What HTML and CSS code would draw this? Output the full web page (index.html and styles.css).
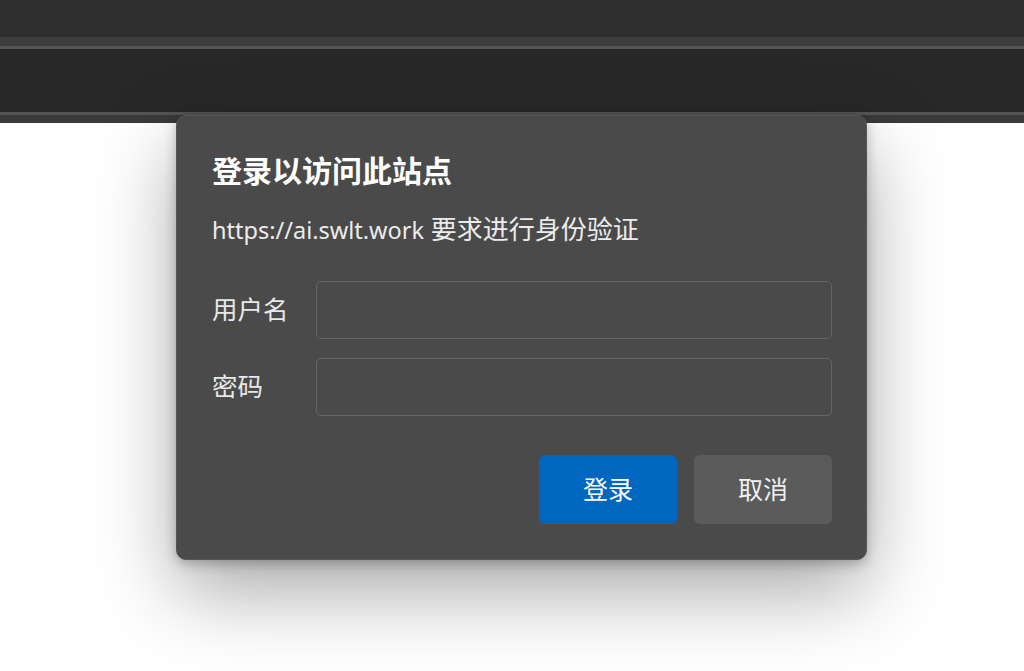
FILE: index.html
```html
<!DOCTYPE html>
<html lang="zh-CN">
<head>
  <meta charset="UTF-8">
  <meta name="viewport" content="width=device-width, initial-scale=1.0">
  <title>登录以访问此站点</title>
  <link rel="stylesheet" href="styles.css">
</head>
<body>

  <!-- Browser chrome -->
  <header class="chrome">
    <div class="tabstrip"></div>
    <div class="tabline"></div>
    <div class="toolbar"></div>
    <div class="infobar"></div>
  </header>

  <main class="page"></main>

  <!-- Auth dialog -->
  <div class="dialog" role="dialog" aria-labelledby="authTitle">
    <h1 id="authTitle" class="dialog-title">登录以访问此站点</h1>
    <p class="dialog-sub"><span class="site">https://ai.swlt.work</span> 要求进行身份验证</p>
    <form class="auth-form" onsubmit="event.preventDefault();">
      <div class="form-row">
        <label for="user">用户名</label>
        <input type="text" id="user" />
      </div>
      <div class="form-row">
        <label for="pass">密码</label>
        <input type="password" id="pass" />
      </div>
      <div class="form-actions">
        <button type="submit" class="btn btn-primary">登录</button>
        <button type="button" class="btn btn-secondary">取消</button>
      </div>
    </form>
  </div>

</body>
</html>
```

FILE: styles.css
```css
body {
  margin: 0;
  padding: 0;
  background: #fff;
  font-family: "Noto Sans", "Noto Sans CJK SC", sans-serif;
  height: 671px;
  overflow: hidden;
}
.chrome { display: flex; flex-direction: column; }
.tabstrip { height: 37px; background: #2e2e2e; }
.tabline {
  height: 9px;
  background: #3c3c3c;
  border-bottom: 3px solid #555;
}
.toolbar {
  height: 63px;
  background: #282828;
  border-bottom: 3px solid #555;
}
.infobar { height: 8px; background: #3a3a3a; }
.page { background: #fff; }

.dialog {
  position: absolute;
  left: 176px;
  top: 115px;
  width: 691px;
  height: 445px;
  box-sizing: border-box;
  padding: 33px 34px 36px 35px;
  background: #4a4a4a;
  border: 1px solid #555;
  border-radius: 10px;
  box-shadow: 0 32px 80px rgba(0, 0, 0, 0.34), 0 4px 12px rgba(0, 0, 0, 0.25);
  color: #fff;
  display: flex;
  flex-direction: column;
}
.dialog-title {
  margin: 0;
  font-family: "Noto Sans CJK SC", sans-serif;
  font-size: 30px;
  font-weight: 700;
  line-height: 40px;
}
.dialog-sub {
  margin: 22px 0 0;
  font-size: 26px;
  line-height: 36px;
  color: #ececec;
}
.dialog-sub .site { font-size: 23.5px; }
.auth-form { margin-top: 33px; }
.form-row {
  display: flex;
  align-items: center;
  margin-bottom: 19px;
}
.form-row label {
  width: 104px;
  flex: none;
  font-size: 25.5px;
  padding-bottom: 5px;
  color: #e8e8e8;
}
.form-row input {
  flex: 1;
  height: 58px;
  box-sizing: border-box;
  background: #4a4a4a;
  border: 1.5px solid #646464;
  border-radius: 5px;
  color: #fff;
  font-size: 22px;
  padding: 0 12px;
  outline: none;
}
.form-actions {
  display: flex;
  justify-content: flex-end;
  gap: 17px;
  margin-top: 39px;
}
.btn {
  width: 138px;
  height: 69px;
  border: none;
  border-radius: 6px;
  padding: 0 0 4px;
  font-family: "Noto Sans CJK SC", sans-serif;
  font-size: 25px;
  color: #fff;
  cursor: pointer;
}
.btn-primary { background: #0067c0; }
.btn-secondary { background: #5b5b5b; color: #f0f0f0; }
```
